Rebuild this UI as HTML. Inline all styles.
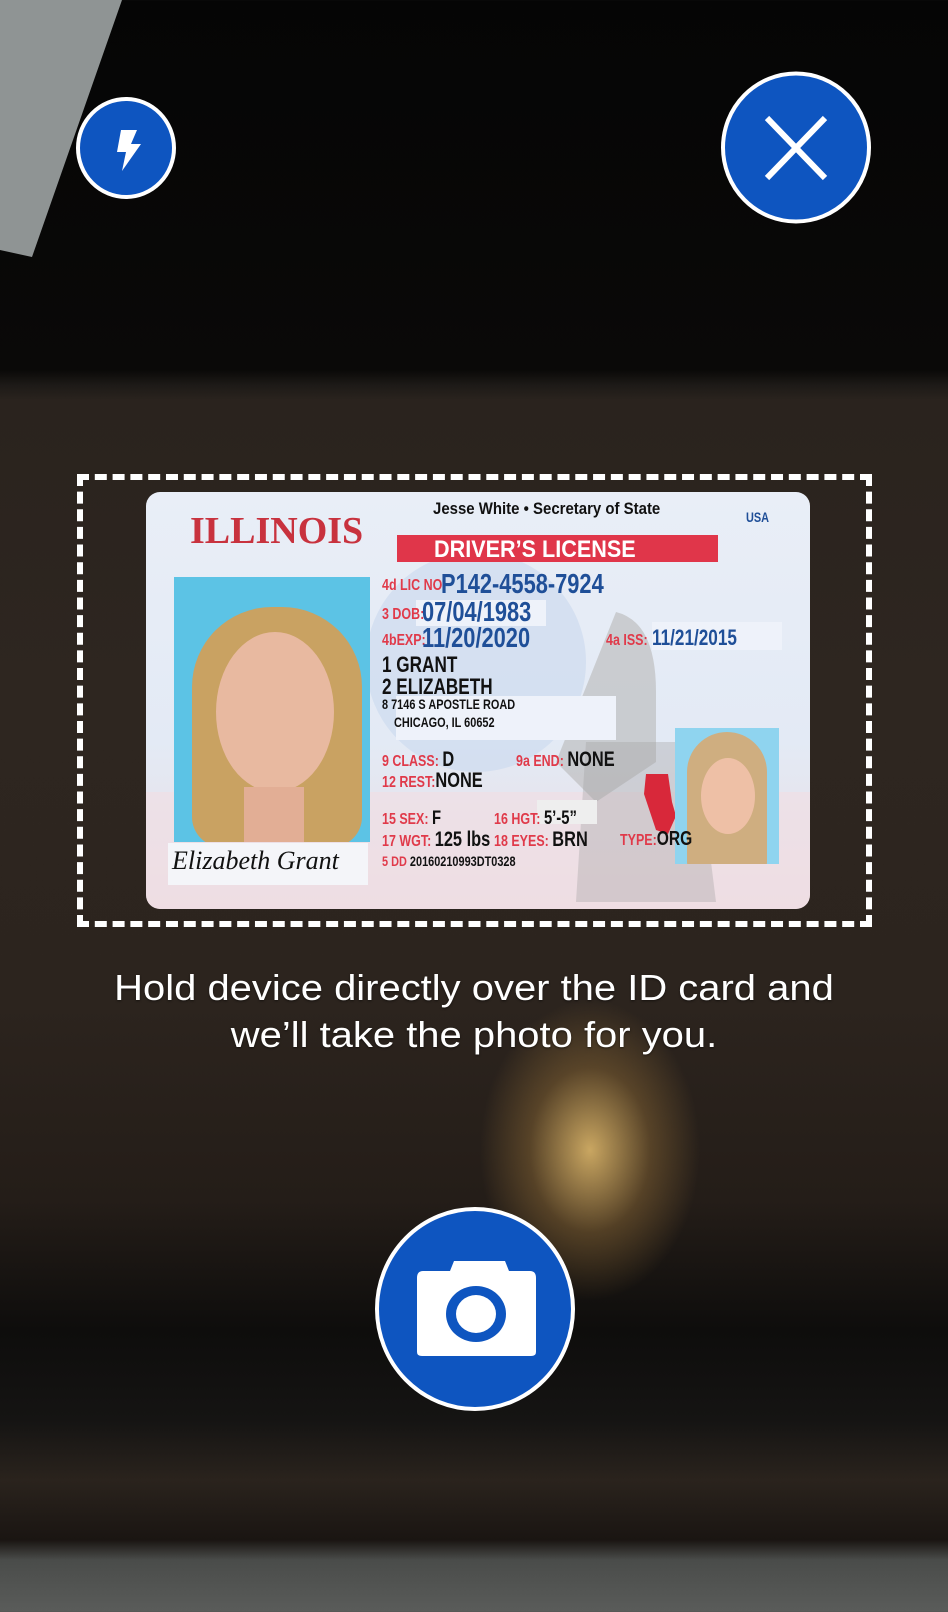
<!DOCTYPE html>
<html><head><meta charset="utf-8"><style>
*{margin:0;padding:0;box-sizing:border-box}
body{width:948px;height:1612px;overflow:hidden;position:relative;font-family:"Liberation Sans",sans-serif;
background:
radial-gradient(ellipse 110px 150px at 590px 1150px,rgba(230,190,110,.85),rgba(160,120,60,.4) 55%,rgba(0,0,0,0) 100%),
linear-gradient(180deg,#050505 0px,#0a0908 370px,#1d1a17 385px,#2a231e 400px,#2e2620 700px,#2c241e 1000px,#241d18 1200px,#0e0d0c 1330px,#151413 1420px,#2a231d 1480px,#1a1512 1540px,#4a4c4a 1560px,#5a5c5a 1612px);}
.a{position:absolute;white-space:nowrap}
.c{transform:scaleX(.78);transform-origin:left top;font-weight:bold}
.r{color:#e03a4a}
.b{color:#1f4f98}
.k{color:#111}
</style></head><body>
<svg class="a" style="left:0;top:0" width="948" height="300"><polygon points="0,0 122,0 32,257 0,250" fill="#8f9494"/></svg>
<svg class="a" style="left:75px;top:96px" width="102" height="104"><ellipse cx="51" cy="52" rx="48" ry="49" fill="#0e55c0" stroke="#fff" stroke-width="4"/><path d="M46 34 L62 34 L56 48 L66 48 L47 75 L51 56 L42 56 Z" fill="#fff"/></svg>
<svg class="a" style="left:719px;top:70px" width="154" height="155"><ellipse cx="77" cy="77.5" rx="73" ry="74" fill="#0e55c0" stroke="#fff" stroke-width="4"/><path d="M48 48 L106 108 M106 48 L48 108" stroke="#fff" stroke-width="6"/></svg>
<div class="a" style="left:77px;top:474px;width:795px;height:453px;border:6px dashed #fff"></div>
<div class="a" style="left:146px;top:492px;width:664px;height:417px;border-radius:14px;overflow:hidden;background:linear-gradient(180deg,#e9eef7,#e3eaf5 60%,#eadde3);">
 <svg class="a" style="left:0;top:0" width="664" height="417">
  <rect x="0" y="300" width="664" height="117" fill="#f2dde2" opacity=".6"/>
  <circle cx="330" cy="170" r="110" fill="#c9d8ef" opacity=".6"/>
  <path d="M470 120 q40 10 40 80 l0 70 l-60 40 l-40 -40 z" fill="#b8b8b8" opacity=".6"/>
  <path d="M440 250 l110 0 l20 160 l-140 0 z" fill="#a0a0a0" opacity=".35"/>
 </svg>
 <div class="a" style="left:44px;top:17px;font-family:'Liberation Serif',serif;font-weight:bold;font-size:38px;color:#c8323e;letter-spacing:0px;">ILLINOIS</div>
 <div class="a c k" style="left:287px;top:7px;font-size:17px;transform:scaleX(.88)">Jesse White • Secretary of State</div>
 <div class="a" style="left:251px;top:43px;width:321px;height:27px;background:#e0364a"></div>
 <div class="a c" style="left:288px;top:44px;font-size:24px;color:#fff;transform:scaleX(.9)">DRIVER’S LICENSE</div>
 <div class="a c b" style="left:600px;top:17px;font-size:14px">USA</div>
 <div class="a" style="left:28px;top:85px;width:196px;height:265px;background:#5cc3e5;overflow:hidden">
  <div class="a" style="left:18px;top:30px;width:170px;height:240px;border-radius:80px 80px 30px 30px;background:#c9a262"></div>
  <div class="a" style="left:42px;top:55px;width:118px;height:160px;border-radius:50%;background:#e8b9a0"></div>
  <div class="a" style="left:70px;top:210px;width:60px;height:60px;background:#e2ae95"></div>
 </div>
 <div class="a" style="left:22px;top:351px;width:200px;height:42px;background:#f4f5f9"></div>
 <div class="a" style="left:26px;top:354px;font-family:'Liberation Serif',serif;font-style:italic;font-size:26px;color:#111">Elizabeth Grant</div>
 <div class="a c" style="left:236px;top:85px;font-size:16px"><span class="r">4d LIC NO:</span></div>
 <div class="a c b" style="left:295px;top:76px;font-size:28px">P142-4558-7924</div>
 <div class="a" style="left:270px;top:108px;width:130px;height:26px;background:#eef2fa"></div>
 <div class="a c r" style="left:236px;top:114px;font-size:16px">3 DOB:</div>
 <div class="a c b" style="left:276px;top:104px;font-size:28px">07/04/1983</div>
 <div class="a c r" style="left:236px;top:140px;font-size:16px">4bEXP:</div>
 <div class="a c b" style="left:276px;top:130px;font-size:28px">11/20/2020</div>
 <div class="a c r" style="left:460px;top:140px;font-size:16px">4a ISS:</div>
 <div class="a" style="left:506px;top:130px;width:130px;height:28px;background:#eef2fa"></div>
 <div class="a c b" style="left:506px;top:133px;font-size:22px">11/21/2015</div>
 <div class="a c k" style="left:236px;top:160px;font-size:22px">1 GRANT</div>
 <div class="a c k" style="left:236px;top:182px;font-size:22px">2 ELIZABETH</div>
 <div class="a" style="left:250px;top:204px;width:220px;height:44px;background:#eef2fa"></div>
 <div class="a c k" style="left:236px;top:204px;font-size:14px">8 7146 S APOSTLE ROAD</div>
 <div class="a c k" style="left:248px;top:222px;font-size:14px">CHICAGO, IL 60652</div>
 <div class="a c" style="left:236px;top:256px;font-size:16px"><span class="r">9 CLASS:</span> <span class="k" style="font-size:21px">D</span></div>
 <div class="a c" style="left:370px;top:256px;font-size:16px"><span class="r">9a END:</span> <span class="k" style="font-size:21px">NONE</span></div>
 <div class="a c" style="left:236px;top:277px;font-size:16px"><span class="r">12 REST:</span><span class="k" style="font-size:21px">NONE</span></div>
 <svg class="a" style="left:496px;top:280px" width="36" height="64"><path d="M4 2 L26 2 L30 30 L34 44 L26 62 L14 58 L8 40 L2 22 Z" fill="#d8283a"/></svg>
 <div class="a" style="left:529px;top:236px;width:104px;height:136px;background:#8fd4ef;overflow:hidden">
  <div class="a" style="left:12px;top:4px;width:80px;height:140px;border-radius:40px 40px 10px 10px;background:#cfae80"></div>
  <div class="a" style="left:26px;top:30px;width:54px;height:76px;border-radius:50%;background:#eec0a6"></div>
 </div>
 <div class="a c" style="left:236px;top:316px;font-size:16px"><span class="r">15 SEX:</span> <span class="k" style="font-size:19px">F</span></div>
 <div class="a" style="left:391px;top:308px;width:60px;height:24px;background:#eee"></div>
 <div class="a c" style="left:348px;top:316px;font-size:16px"><span class="r">16 HGT:</span> <span class="k" style="font-size:19px">5’-5”</span></div>
 <div class="a c" style="left:236px;top:336px;font-size:16px"><span class="r">17 WGT:</span> <span class="k" style="font-size:21px">125 lbs</span></div>
 <div class="a c" style="left:348px;top:336px;font-size:16px"><span class="r">18 EYES:</span> <span class="k" style="font-size:21px">BRN</span></div>
 <div class="a c" style="left:474px;top:336px;font-size:16px"><span class="r">TYPE:</span><span class="k" style="font-size:20px">ORG</span></div>
 <div class="a c" style="left:236px;top:361px;font-size:14px"><span class="r">5 DD</span> <span class="k">20160210993DT0328</span></div>
</div>
<div class="a" style="left:0;top:964px;width:948px;text-align:center;color:#fff;font-size:36px;line-height:47px;white-space:normal;transform:scaleX(1.11);transform-origin:474px 0;text-shadow:0 1px 2px rgba(0,0,0,.5)">Hold device directly over the ID card and<br>we’ll take the photo for you.</div>
<svg class="a" style="left:374px;top:1206px" width="202" height="206"><ellipse cx="101" cy="103" rx="98" ry="100" fill="#0e55c0" stroke="#fff" stroke-width="4"/>
<path d="M49 65 Q43 65 43 72 L43 146 Q43 150 48 150 L157 150 Q162 150 162 146 L162 72 Q162 65 156 65 L135 65 L131 55 L80 55 L76 65 Z" fill="#fff"/>
<ellipse cx="102" cy="108" rx="30" ry="28" fill="#0e55c0"/><ellipse cx="102" cy="108" rx="20" ry="19" fill="#fff"/></svg>
</body></html>
